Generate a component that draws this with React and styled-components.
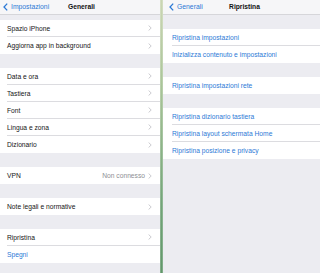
import React from "react";
import styled, { createGlobalStyle } from "styled-components";

const Global = createGlobalStyle`
  html, body { margin: 0; padding: 0; }
  body {
    width: 320px; height: 273px; overflow: hidden;
    font-family: "Liberation Sans", Arial, sans-serif;
    -webkit-font-smoothing: antialiased;
  }
`;

const BLUE = "#2c79d6";

const Screen = styled.div`
  display: flex;
  width: 320px;
  height: 273px;
  background: #ececf1;
`;

const Panel = styled.div`
  display: flex;
  flex-direction: column;
  width: ${(p) => p.$w};
  flex: ${(p) => (p.$grow ? 1 : "none")};
  background: #ececf1;
  overflow: hidden;
`;

const Divider = styled.div`
  width: 3px;
  flex: none;
  background: linear-gradient(
      to right,
      rgba(255, 255, 255, 0.35),
      rgba(255, 255, 255, 0) 45%,
      rgba(255, 255, 255, 0.3)
    ),
    linear-gradient(to bottom, #c9d5b2 0%, #a9c497 30%, #6fa275 75%, #5d9466 100%);
`;

const NavBar = styled.div`
  height: 15px;
  flex: none;
  box-sizing: border-box;
  display: grid;
  grid-template-columns: 1fr auto 1fr;
  align-items: center;
  background: #f6f6f8;
  border-bottom: 0.5px solid #d6d6da;
  padding-left: ${(p) => p.$pad}px;
`;

const Back = styled.div`
  display: flex;
  align-items: center;
  gap: 3px;
  color: ${BLUE};
  font-size: 6.8px;
  line-height: 1;
`;

const Title = styled.div`
  font-size: 6.7px;
  font-weight: 700;
  color: #111;
  line-height: 1;
`;

const Group = styled.div`
  margin-top: ${(p) => p.$top}px;
  background: #fff;
  flex: none;
`;

const Row = styled.div`
  height: 17px;
  padding-left: ${(p) => p.$inset}px;
  display: flex;
`;

const RowInner = styled.div`
  flex: 1;
  display: flex;
  align-items: center;
  justify-content: space-between;
  padding-right: 8px;
  box-sizing: border-box;
  border-bottom: ${(p) => (p.$last ? "none" : "0.5px solid #dcdce0")};
`;

const Label = styled.span`
  font-size: 6.7px;
  color: ${(p) => (p.$blue ? BLUE : "#151515")};
  white-space: nowrap;
`;

const Detail = styled.span`
  display: flex;
  align-items: center;
  gap: 3px;
  font-size: 6.7px;
  color: #8e8e93;
`;

const Chevron = () => (
  <svg width="4" height="6" viewBox="0 0 4 6">
    <path d="M0.6 0.5 L3.2 3 L0.6 5.5" fill="none" stroke="#c5c5ca" strokeWidth="0.9" />
  </svg>
);

const BackChevron = () => (
  <svg width="5" height="8" viewBox="0 0 5 8">
    <path d="M4.2 0.6 L1 4 L4.2 7.4" fill="none" stroke={BLUE} strokeWidth="1.3" />
  </svg>
);

const Cell = ({ label, detail, blue, last, chevron = true, inset }) => (
  <Row $inset={inset}>
    <RowInner $last={last}>
      <Label $blue={blue}>{label}</Label>
      {chevron && (
        <Detail>
          {detail}
          <Chevron />
        </Detail>
      )}
    </RowInner>
  </Row>
);

const leftGroups = [
  { top: 5, rows: [{ label: "Spazio iPhone" }, { label: "Aggiorna app in background" }] },
  {
    top: 14,
    rows: [
      { label: "Data e ora" },
      { label: "Tastiera" },
      { label: "Font" },
      { label: "Lingua e zona" },
      { label: "Dizionario" },
    ],
  },
  { top: 14, rows: [{ label: "VPN", detail: "Non connesso" }] },
  { top: 14, rows: [{ label: "Note legali e normative" }] },
  {
    top: 14,
    rows: [{ label: "Ripristina" }, { label: "Spegni", blue: true, chevron: false }],
  },
];

const rightGroups = [
  { top: 14, rows: ["Ripristina impostazioni", "Inizializza contenuto e impostazioni"] },
  { top: 14, rows: ["Ripristina impostazioni rete"] },
  {
    top: 14,
    rows: [
      "Ripristina dizionario tastiera",
      "Ripristina layout schermata Home",
      "Ripristina posizione e privacy",
    ],
  },
];

export default function App() {
  return (
    <>
      <Global />
      <Screen>
        <Panel $w="160px">
          <NavBar $pad={3}>
            <Back>
              <BackChevron />
              Impostazioni
            </Back>
            <Title>Generali</Title>
            <span />
          </NavBar>
          {leftGroups.map((g, gi) => (
            <Group key={gi} $top={g.top}>
              {g.rows.map((r, ri) => (
                <Cell
                  key={ri}
                  inset={7}
                  label={r.label}
                  detail={r.detail}
                  blue={r.blue}
                  chevron={r.chevron !== false}
                  last={ri === g.rows.length - 1}
                />
              ))}
            </Group>
          ))}
        </Panel>
        <Divider />
        <Panel $grow>
          <NavBar $pad={6}>
            <Back>
              <BackChevron />
              Generali
            </Back>
            <Title>Ripristina</Title>
            <span />
          </NavBar>
          {rightGroups.map((g, gi) => (
            <Group key={gi} $top={g.top}>
              {g.rows.map((r, ri) => (
                <Cell
                  key={ri}
                  inset={9}
                  label={r}
                  blue
                  chevron={false}
                  last={ri === g.rows.length - 1}
                />
              ))}
            </Group>
          ))}
        </Panel>
      </Screen>
    </>
  );
}
